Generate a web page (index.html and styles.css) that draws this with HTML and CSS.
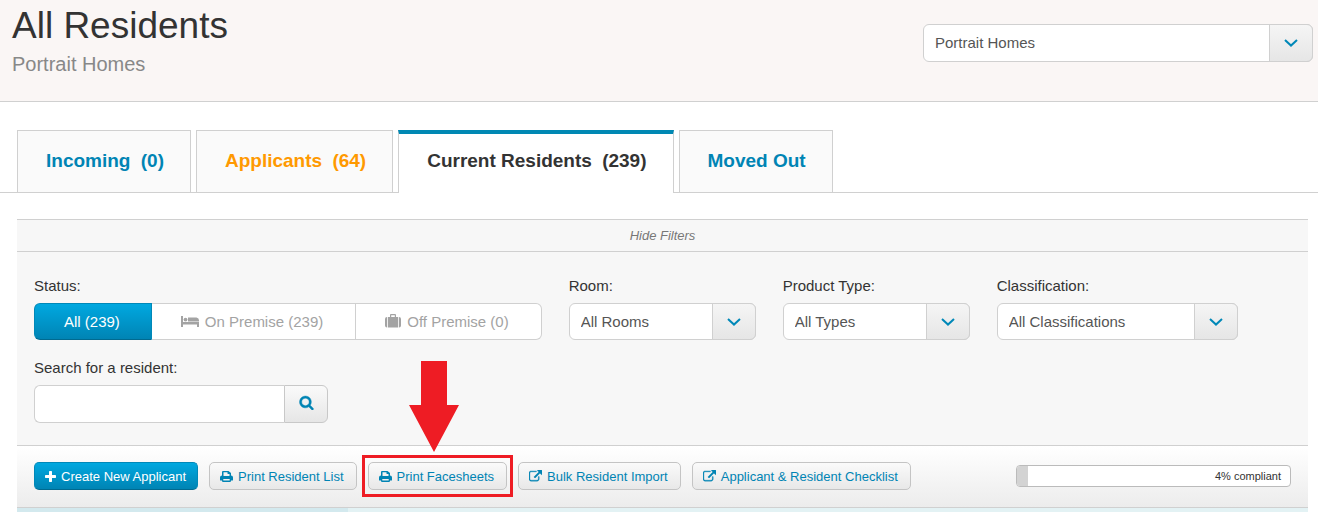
FILE: index.html
```html
<!DOCTYPE html>
<html lang="en">
<head>
  <meta charset="UTF-8">
  <title>All Residents</title>
  <meta name="viewport" content="width=device-width, initial-scale=1.0">
  <link rel="stylesheet" href="styles.css">
</head>
<body>
  <!-- Shared icons -->
  <svg class="icon-defs" aria-hidden="true">
    <symbol id="icon-chevron" viewBox="0 0 14 8">
      <path d="M1 1l6 5.600L13 1" fill="none" stroke="currentColor" stroke-width="2"/>
    </symbol>
    <symbol id="icon-print" viewBox="0 0 13 13">
      <path fill-rule="evenodd" d="M2 5.500V2q0-1 1-1h5.500L11 3v2.500q2 0 2 2V10q0 .5-.5.500H11q0 1.500-1 1.500H3q-1 0-1-1.500H.5Q0 10.500 0 10V7.500q0-2 2-2zM3.500 2.300V6h6V4H8q-.5 0-.5-.5V2.300zM3.300 9v1.600h6.400V9z"/>
    </symbol>
    <symbol id="icon-external" viewBox="0 0 1792 1792">
      <path stroke="currentColor" stroke-width="50" d="M1408 928v320q0 119-84.500 203.500t-203.500 84.500h-832q-119 0-203.500-84.500t-84.500-203.500v-832q0-119 84.500-203.500t203.500-84.500h704q14 0 23 9t9 23v64q0 14-9 23t-23 9h-704q-66 0-113 47t-47 113v832q0 66 47 113t113 47h832q66 0 113-47t47-113v-320q0-14 9-23t23-9h64q14 0 23 9t9 23zm384-864v512q0 26-19 45t-45 19-45-19l-176-176-652 652q-10 10-23 10t-23-10l-114-114q-10-10-10-23t10-23l652-652-176-176q-19-19-19-45t19-45 45-19h512q26 0 45 19t19 45z"/>
    </symbol>
  </svg>

  <header class="page-header">
    <div class="page-title">
      <h1>All Residents</h1>
      <p>Portrait Homes</p>
    </div>
    <div class="select select-community">
      <select aria-label="Community">
        <option>Portrait Homes</option>
      </select>
      <span class="select-arrow"><svg><use href="#icon-chevron"/></svg></span>
    </div>
  </header>

  <nav class="tabs">
    <a class="tab" href="#incoming">Incoming <span>(0)</span></a>
    <a class="tab tab-warning" href="#applicants">Applicants <span>(64)</span></a>
    <a class="tab tab-active" href="#current">Current Residents <span>(239)</span></a>
    <a class="tab" href="#moved-out">Moved Out</a>
  </nav>

  <main class="content">
    <button type="button" class="toggle-filters">Hide Filters</button>

    <form class="filters">
      <div class="filter">
        <span class="filter-label" id="status-label">Status:</span>
        <div class="btn-group" role="group" aria-labelledby="status-label">
          <button type="button" class="active">All (239)</button>
          <button type="button">
            <svg width="18" height="14" viewBox="0 0 18 14"><path d="M0 1h2v6h16v5h-2V9.500H2V12H0z"/><circle cx="4.500" cy="4.600" r="1.900"/><path d="M7 2.500h8.500q2.500.5 2.500 3v1H7z"/></svg>
            On Premise (239)
          </button>
          <button type="button">
            <svg width="16" height="16" viewBox="0 0 16 16"><path d="M2.200 3v10.500H2q-2 0-2-2V5q0-2 2-2zM13.800 3v10.500h.2q2 0 2-2V5q0-2-2-2zM3 3h2V1q0-1 1-1h4q1 0 1 1v2h2v10.500H3zM6.200 1.200V3h3.600V1.200z"/></svg>
            Off Premise (0)
          </button>
        </div>
      </div>

      <div class="filter">
        <label for="room">Room:</label>
        <div class="select">
          <select id="room"><option>All Rooms</option></select>
          <span class="select-arrow"><svg><use href="#icon-chevron"/></svg></span>
        </div>
      </div>

      <div class="filter">
        <label for="product-type">Product Type:</label>
        <div class="select">
          <select id="product-type"><option>All Types</option></select>
          <span class="select-arrow"><svg><use href="#icon-chevron"/></svg></span>
        </div>
      </div>

      <div class="filter">
        <label for="classification">Classification:</label>
        <div class="select select-wide">
          <select id="classification"><option>All Classifications</option></select>
          <span class="select-arrow"><svg><use href="#icon-chevron"/></svg></span>
        </div>
      </div>

      <div class="filter">
        <label for="search">Search for a resident:</label>
        <div class="search-box">
          <input type="text" id="search">
          <button type="submit" aria-label="Search">
            <svg width="15" height="15" viewBox="0 0 1792 1792"><path stroke="currentColor" stroke-width="50" d="M1216 832q0-185-131.500-316.500t-316.500-131.500-316.500 131.500-131.500 316.500 131.500 316.500 316.500 131.500 316.500-131.500 131.500-316.500zm512 832q0 52-38 90t-90 38q-54 0-90-38l-343-342q-179 124-399 124-143 0-273.500-55.500t-225-150-150-225-55.500-273.500 55.500-273.500 150-225 225-150 273.500-55.500 273.500 55.500 225 150 150 225 55.500 273.500q0 220-124 399l343 343q37 37 37 90z"/></svg>
          </button>
        </div>
      </div>
    </form>

    <div class="toolbar">
      <button type="button" class="btn btn-primary">
        <svg viewBox="0 0 1408 1408"><path transform="translate(-192 -128)" d="M1600 736v192q0 40-28 68t-68 28h-416v416q0 40-28 68t-68 28h-192q-40 0-68-28t-28-68v-416h-416q-40 0-68-28t-28-68v-192q0-40 28-68t68-28h416v-416q0-40 28-68t68-28h192q40 0 68 28t28 68v416h416q40 0 68 28t28 68z"/></svg>
        Create New Applicant
      </button>
      <button type="button" class="btn"><svg><use href="#icon-print"/></svg>Print Resident List</button>
      <div class="callout">
        <button type="button" class="btn"><svg><use href="#icon-print"/></svg>Print Facesheets</button>
        <svg class="callout-arrow" viewBox="0 0 50 91"><path d="M12 0h26v44h12L25 91 0 44h12z"/></svg>
      </div>
      <button type="button" class="btn"><svg><use href="#icon-external"/></svg>Bulk Resident Import</button>
      <button type="button" class="btn"><svg><use href="#icon-external"/></svg>Applicant &amp; Resident Checklist</button>

      <div class="compliance" role="progressbar" aria-valuenow="4" aria-valuemin="0" aria-valuemax="100">
        <div class="compliance-bar" style="width: 4%"></div>
        <span>4% compliant</span>
      </div>
    </div>

    <div class="list-head">
      <div class="list-head-sorted"></div>
    </div>
  </main>
</body>
</html>
```

FILE: styles.css
```css
* {
  box-sizing: border-box;
}
body {
  margin: 0;
  background: #fff;
  color: #333;
  font-family: "Liberation Sans", Arial, sans-serif;
  font-size: 15px;
  line-height: 20px;
}
button, input, select {
  font: inherit;
  margin: 0;
}
button {
  cursor: pointer;
}
svg {
  fill: currentColor;
  flex: none;
}
.icon-defs {
  display: none;
}

/* Header */
.page-header {
  display: flex;
  justify-content: space-between;
  align-items: flex-start;
  padding: 4px 5px 23px 12px;
  background: #faf6f5;
  border-bottom: 1px solid #d0d0d0;
}
.page-title h1 {
  margin: 0;
  font-size: 37px;
  font-weight: normal;
  line-height: 44px;
}
.page-title p {
  margin: 0;
  padding-top: 3px;
  color: #888;
  font-size: 20px;
  line-height: 27px;
}

/* Selects */
.select {
  position: relative;
  width: 187px;
}
.select select {
  display: block;
  width: 100%;
  height: 37px;
  padding: 0 52px 0 11px;
  appearance: none;
  background: #fff;
  border: 1px solid #d0d0d0;
  border-radius: 6px;
  color: #555;
}
.select-arrow {
  position: absolute;
  top: 0;
  right: 0;
  bottom: 0;
  display: flex;
  align-items: center;
  justify-content: center;
  width: 44px;
  background: linear-gradient(#f5f5f5, #e6e6e6);
  border: 1px solid #d0d0d0;
  border-radius: 0 6px 6px 0;
  color: #0088b8;
  pointer-events: none;
}
.select-arrow svg {
  width: 14px;
  height: 8px;
}
.select-wide {
  width: 241px;
}
.select-community {
  width: 390px;
  margin-top: 20px;
}
.select-community select {
  height: 38px;
}

/* Tabs */
.tabs {
  display: flex;
  gap: 5px;
  padding: 28px 17px 0;
  border-bottom: 1px solid #d0d0d0;
}
.tab {
  height: 62px;
  padding: 20px 26px 0 28px;
  background: #fafafa;
  border: 1px solid #d0d0d0;
  border-bottom: 0;
  color: #0084b4;
  font-size: 19px;
  font-weight: bold;
  text-decoration: none;
}
.tab span {
  margin-left: 5px;
}
.tab-warning {
  color: #f90;
}
.tab-active {
  height: 63px;
  margin-bottom: -1px;
  padding-top: 17px;
  background: #fff;
  border-top: 4px solid #0088b3;
  color: #333;
}

/* Filters */
.content {
  margin: 26px 10px 0 17px;
}
.toggle-filters {
  display: block;
  width: 100%;
  height: 33px;
  padding: 0;
  background: #f7f7f7;
  border: 1px solid #d0d0d0;
  border-width: 1px 0;
  color: #777;
  font-size: 13px;
  font-style: italic;
}
.filters {
  display: flex;
  flex-wrap: wrap;
  gap: 18px 27px;
  padding: 24px 17px 22px;
  background: #f7f7f7;
}
.filter label, .filter-label {
  display: block;
  margin-bottom: 7px;
}
.btn-group {
  display: flex;
}
.btn-group button {
  display: flex;
  align-items: center;
  gap: 6px;
  height: 37px;
  padding: 0 32px 0 29px;
  background: #fff;
  border: 1px solid #d0d0d0;
  border-left: 0;
  color: #a3a3a3;
}
.btn-group button:last-child {
  border-radius: 0 6px 6px 0;
}
.btn-group .active {
  padding: 0 31px 0 29px;
  background: linear-gradient(#00a8e0, #0084b4);
  border: 1px solid #0088b8;
  border-bottom-color: #006a90;
  border-radius: 6px 0 0 6px;
  color: #fff;
}
.search-box {
  display: flex;
}
.search-box input {
  width: 250px;
  height: 38px;
  padding: 0 11px;
  border: 1px solid #d0d0d0;
  border-right: 0;
  border-radius: 6px 0 0 6px;
}
.search-box button {
  display: flex;
  align-items: center;
  justify-content: center;
  width: 44px;
  padding: 0 0 4px;
  background: linear-gradient(#fafafa, #e6e6e6);
  border: 1px solid #c8c8c8;
  border-radius: 0 6px 6px 0;
  color: #0084b4;
}

/* Toolbar */
.toolbar {
  display: flex;
  align-items: center;
  gap: 11px;
  padding: 16px 17px 17px;
  background: linear-gradient(#fff, #ececec);
  border-top: 1px solid #d0d0d0;
  border-bottom: 1px solid #d0d0d0;
}
.btn {
  display: flex;
  align-items: center;
  gap: 5px;
  height: 28px;
  padding: 2px 12px 0 10px;
  background: linear-gradient(#fafafa, #e8e8e8);
  border: 1px solid #c4c4c4;
  border-radius: 5px;
  color: #0084b4;
  font-size: 13px;
  white-space: nowrap;
}
.btn svg {
  width: 13px;
  height: 13px;
  margin-bottom: 2px;
}
.btn-primary {
  padding: 2px 11px 0 10px;
  background: linear-gradient(#00a8e0, #0084b4);
  border-color: #0088b8;
  border-bottom-color: #006a90;
  color: #fff;
}
.btn-primary svg {
  width: 11px;
  height: 11px;
}

/* Highlighted action */
.callout {
  position: relative;
}
.callout::after {
  content: "";
  position: absolute;
  inset: -7px -6px;
  border: 3px solid #ee1c24;
  pointer-events: none;
}
.callout .callout-arrow {
  position: absolute;
  bottom: 38px;
  left: 41px;
  width: 50px;
  height: 91px;
  color: #ee1c24;
}

.compliance {
  display: flex;
  align-items: center;
  justify-content: space-between;
  width: 275px;
  height: 22px;
  margin-left: auto;
  background: #fff;
  border: 1px solid #bbb;
  border-radius: 4px;
  overflow: hidden;
  font-size: 11px;
}
.compliance-bar {
  align-self: stretch;
  background: #d3d3d3;
}
.compliance span {
  padding-right: 9px;
}

.list-head {
  height: 4px;
  background: #e3f2f4;
}
.list-head-sorted {
  width: 331px;
  height: 100%;
  background: #d3e9ee;
}
```
